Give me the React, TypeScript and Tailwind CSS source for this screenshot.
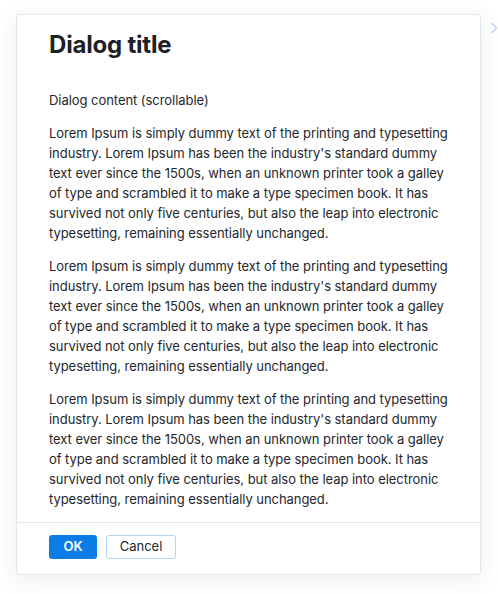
import React from "react";

const LOREM =
  "Lorem Ipsum is simply dummy text of the printing and typesetting industry. Lorem Ipsum has been the industry's standard dummy text ever since the 1500s, when an unknown printer took a galley of type and scrambled it to make a type specimen book. It has survived not only five centuries, but also the leap into electronic typesetting, remaining essentially unchanged.";

export default function App() {
  return (
    <div
      className="relative w-[498px] h-[594px] bg-white overflow-hidden"
      style={{ fontFamily: "Inter, 'Noto Sans', sans-serif" }}
    >
      <svg
        className="absolute left-[490px] top-[22px]"
        width="8"
        height="12"
        viewBox="0 0 8 12"
        fill="none"
      >
        <path d="M2 1.5 L6.5 6 L2 10.5" stroke="#bcd5ee" strokeWidth="1.6" strokeLinecap="round" strokeLinejoin="round" />
      </svg>
      <div className="pt-[14px] pl-[16px]">
        <div className="w-[465px] h-[561px] bg-white border border-[#e3e6ea] rounded-[3px] shadow-[0_4px_24px_rgba(30,40,60,0.09)] flex flex-col">
          <div className="px-8 pt-[14px] pb-[16px]">
            <h2 className="text-[24px] leading-[32px] font-bold text-[#1d2025] tracking-[-0.2px]">
              Dialog title
            </h2>
          </div>
          <div className="flex-1 pl-8 pr-[28px] overflow-hidden text-[13px] leading-[20px] text-[#24272b] tracking-[-0.05px]">
            <p className="my-[13px]">Dialog content (scrollable)</p>
            <p className="my-[13px]">{LOREM}</p>
            <p className="my-[13px]">{LOREM}</p>
            <p className="my-[13px]">{LOREM}</p>
          </div>
          <div className="border-t border-[#e3e6ea] px-8 pt-[12px] pb-[15px] flex gap-[9px]">
            <button className="h-[24px] w-[48px] rounded-[3px] bg-[#0b7de6] text-white text-[13px] font-semibold">
              OK
            </button>
            <button className="h-[24px] w-[70px] rounded-[3px] bg-white border border-[#b9d3ee] text-[#24272b] text-[13px]">
              Cancel
            </button>
          </div>
        </div>
      </div>
    </div>
  );
}
